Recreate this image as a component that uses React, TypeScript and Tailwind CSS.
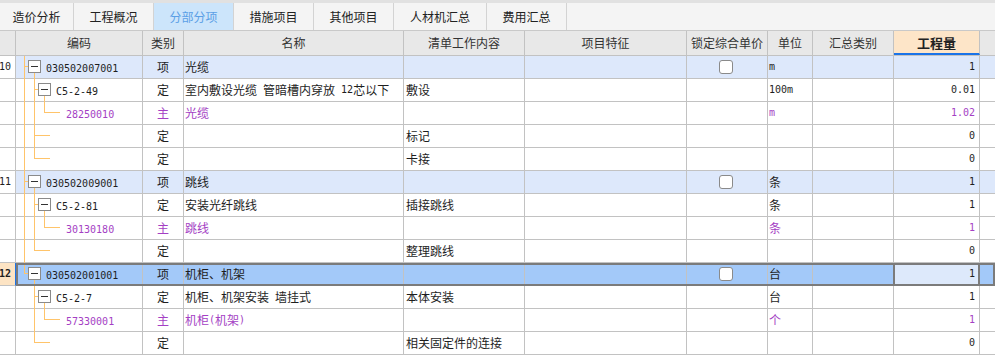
import React from 'react';

type Kind = 'item' | 'def' | 'main' | 'leaf';

interface Row {
  no?: string;
  kind: Kind;
  code?: string;
  type: string;
  name?: string;
  content?: string;
  check?: boolean;
  unit?: string;
  qty: string;
  last?: boolean;
  itemLast?: boolean;
  selected?: boolean;
}

const tabs = ['造价分析', '工程概况', '分部分项', '措施项目', '其他项目', '人材机汇总', '费用汇总'];
const tabWidths = ['w-[74px]', 'w-[80px]', 'w-[80px]', 'w-[80px]', 'w-[80px]', 'w-[93px]', 'w-[80px]'];

const cols = [
  'w-[16px]',
  'w-[127px]',
  'w-[41px]',
  'w-[220px]',
  'w-[121px]',
  'w-[162px]',
  'w-[81px]',
  'w-[45px]',
  'w-[81px]',
  'w-[86px]',
];

const heads = ['', '编码', '类别', '名称', '清单工作内容', '项目特征', '锁定综合单价', '单位', '汇总类别', '工程量'];

const rows: Row[] = [
  { no: '10', kind: 'item', code: '030502007001', type: '项', name: '光缆', check: true, unit: 'm', qty: '1' },
  { kind: 'def', code: 'C5-2-49', type: '定', name: '室内敷设光缆 管暗槽内穿放 12芯以下', content: '敷设', unit: '100m', qty: '0.01' },
  { kind: 'main', code: '28250010', type: '主', name: '光缆', unit: 'm', qty: '1.02' },
  { kind: 'leaf', type: '定', content: '标记', qty: '0' },
  { kind: 'leaf', type: '定', content: '卡接', qty: '0', last: true },
  { no: '11', kind: 'item', code: '030502009001', type: '项', name: '跳线', check: true, unit: '条', qty: '1' },
  { kind: 'def', code: 'C5-2-81', type: '定', name: '安装光纤跳线', content: '插接跳线', unit: '条', qty: '1' },
  { kind: 'main', code: '30130180', type: '主', name: '跳线', unit: '条', qty: '1' },
  { kind: 'leaf', type: '定', content: '整理跳线', qty: '0', last: true },
  { no: '12', kind: 'item', code: '030502001001', type: '项', name: '机柜、机架', check: true, unit: '台', qty: '1', itemLast: true, selected: true },
  { kind: 'def', code: 'C5-2-7', type: '定', name: '机柜、机架安装 墙挂式', content: '本体安装', unit: '台', qty: '1', itemLast: true },
  { kind: 'main', code: '57330001', type: '主', name: '机柜(机架)', unit: '个', qty: '1', itemLast: true },
  { kind: 'leaf', type: '定', content: '相关固定件的连接', qty: '0', last: true, itemLast: true },
];

// ascii runs use a narrow mono face so digits sit at half the CJK width
const T = ({ s }: { s?: string }) => {
  if (!s) return null;
  return (
    <>
      {s.split(/([\x00-\x7f]+)/).map((p, i) =>
        /^[\x00-\x7f]+$/.test(p) ? (
          <span key={i} className="font-['DejaVu_Sans_Mono'] text-[10px] whitespace-pre align-[-1px]">
            {p}
          </span>
        ) : (
          <span key={i}>{p}</span>
        )
      )}
    </>
  );
};

const LINE = '#ffc46a';

const Box = ({ x }: { x: number }) => (
  <g>
    <rect x={x + 0.5} y={4.5} width={12} height={12} fill="#fff" stroke="#8a8a8a" />
    <line x1={x + 3} y1={10.5} x2={x + 10} y2={10.5} stroke="#333" />
  </g>
);

const Tree = ({ r }: { r: Row }) => {
  const cy = 10.5;
  const mainFull = !r.itemLast;
  return (
    <svg width={127} height={23} className="absolute left-0 top-0 overflow-visible">
      {r.kind === 'item' ? (
        <>
          <line x1={8.5} y1={0} x2={8.5} y2={r.itemLast ? cy : 23} stroke={LINE} />
          <line x1={8} y1={cy} x2={12} y2={cy} stroke={LINE} />
          <line x1={18.5} y1={17} x2={18.5} y2={23} stroke={LINE} />
          <Box x={12} />
        </>
      ) : (
        <>
          {mainFull && <line x1={8.5} y1={0} x2={8.5} y2={23} stroke={LINE} />}
          <line x1={18.5} y1={0} x2={18.5} y2={r.kind === 'leaf' && r.last ? cy : 23} stroke={LINE} />
          {r.kind === 'def' && (
            <>
              <line x1={18} y1={cy} x2={22} y2={cy} stroke={LINE} />
              <line x1={28.5} y1={17} x2={28.5} y2={23} stroke={LINE} />
              <Box x={22} />
            </>
          )}
          {r.kind === 'main' && (
            <>
              <line x1={28.5} y1={0} x2={28.5} y2={cy} stroke={LINE} />
              <line x1={28} y1={cy} x2={44} y2={cy} stroke={LINE} />
            </>
          )}
          {r.kind === 'leaf' && <line x1={18} y1={cy} x2={34} y2={cy} stroke={LINE} />}
        </>
      )}
    </svg>
  );
};

const codeIndent: Record<Kind, string> = {
  item: 'pl-[30px]',
  def: 'pl-[40px]',
  main: 'pl-[50px]',
  leaf: 'pl-[40px]',
};

const App = () => {
  return (
    <div className="w-[995px] h-[356px] overflow-hidden bg-white font-['Noto_Sans_CJK_SC',sans-serif] text-[12px] text-[#1e1e1e] leading-none">
      {/* Tabs */}
      <div className="h-[31px] bg-[#f4f4f4] border-t-[3px] border-t-[#e1e1e1] border-b border-b-[#c9c9c9] flex">
        {tabs.map((t, i) => (
          <div
            key={t}
            className={`${tabWidths[i]} h-full flex items-center justify-center border-r border-[#d3d3d3] ${
              i === 2 ? 'bg-[#cce5fb] text-[#5b9fe6]' : 'text-[#222]'
            }`}
          >
            {t}
          </div>
        ))}
      </div>

      {/* Header */}
      <div className="h-[25px] flex bg-[#e8e8e8] border-b border-[#c2c2c2] text-[#333]">
        {heads.map((h, i) => (
          <div
            key={i}
            className={`${cols[i]} h-full shrink-0 border-r border-[#c2c2c2] flex items-center justify-center ${
              i === 9 ? 'bg-[#fde5c8] font-bold text-[13px] text-[#222] border-b-2 border-b-[#1a73e8]' : ''
            }`}
          >
            {h}
          </div>
        ))}
        <div className="flex-1" />
      </div>

      {/* Rows */}
      {rows.map((r, idx) => {
        const purple = r.kind === 'main';
        const bg = r.selected ? 'bg-[#a3c9f9]' : r.kind === 'item' ? 'bg-[#dde8fb]' : 'bg-white';
        const tc = purple ? 'text-[#a43fc4]' : '';
        return (
          <div key={idx} className={`relative h-[23px] flex ${bg} ${tc}`}>
            <div
              className={`${cols[0]} shrink-0 h-full border-b border-r border-[#c2c2c2] flex items-center justify-end pr-[4px] ${
                r.selected ? 'bg-[#fde4c4] font-bold border-r-[#1a73e8] pr-[2px]' : 'bg-white'
              }`}
            >
              <T s={r.no} />
            </div>
            <div className={`${cols[1]} shrink-0 relative h-full border-b border-r border-[#c2c2c2] flex items-center ${codeIndent[r.kind]}`}>
              <Tree r={r} />
              <span className="relative">
                <T s={r.code} />
              </span>
            </div>
            <div className={`${cols[2]} shrink-0 h-full border-b border-r border-[#c2c2c2] flex items-center justify-center`}>
              {r.type}
            </div>
            <div className={`${cols[3]} shrink-0 h-full border-b border-r border-[#c2c2c2] flex items-center pl-[1px] whitespace-nowrap overflow-hidden`}>
              <T s={r.name} />
            </div>
            <div className={`${cols[4]} shrink-0 h-full border-b border-r border-[#c2c2c2] flex items-center pl-[2px] whitespace-nowrap`}>
              <T s={r.content} />
            </div>
            <div className={`${cols[5]} shrink-0 h-full border-b border-r border-[#c2c2c2]`} />
            <div className={`${cols[6]} shrink-0 h-full border-b border-r border-[#c2c2c2] flex items-center justify-center pr-[3px]`}>
              {r.check && <div className="w-[14px] h-[14px] rounded-[3px] border border-[#8a8a8a] bg-white" />}
            </div>
            <div className={`${cols[7]} shrink-0 h-full border-b border-r border-[#c2c2c2] flex items-center pl-[1px]`}>
              <T s={r.unit} />
            </div>
            <div className={`${cols[8]} shrink-0 h-full border-b border-r border-[#c2c2c2]`} />
            <div
              className={`${cols[9]} shrink-0 h-full border-b border-r border-[#c2c2c2] flex items-center justify-end pr-[4px] ${
                r.selected ? 'bg-[#dde9fb]' : ''
              }`}
            >
              <T s={r.qty} />
            </div>
            <div className="flex-1 h-full border-b border-[#c2c2c2]" />

            {r.selected && (
              <>
                <div className="absolute left-[16px] right-0 top-0 bottom-0 border-2 border-[#7b7b7b] pointer-events-none" />
                <div className="absolute left-[893px] w-[87px] top-0 bottom-0 border-2 border-[#7b7b7b] pointer-events-none" />
              </>
            )}
          </div>
        );
      })}
    </div>
  );
};

export default App;
